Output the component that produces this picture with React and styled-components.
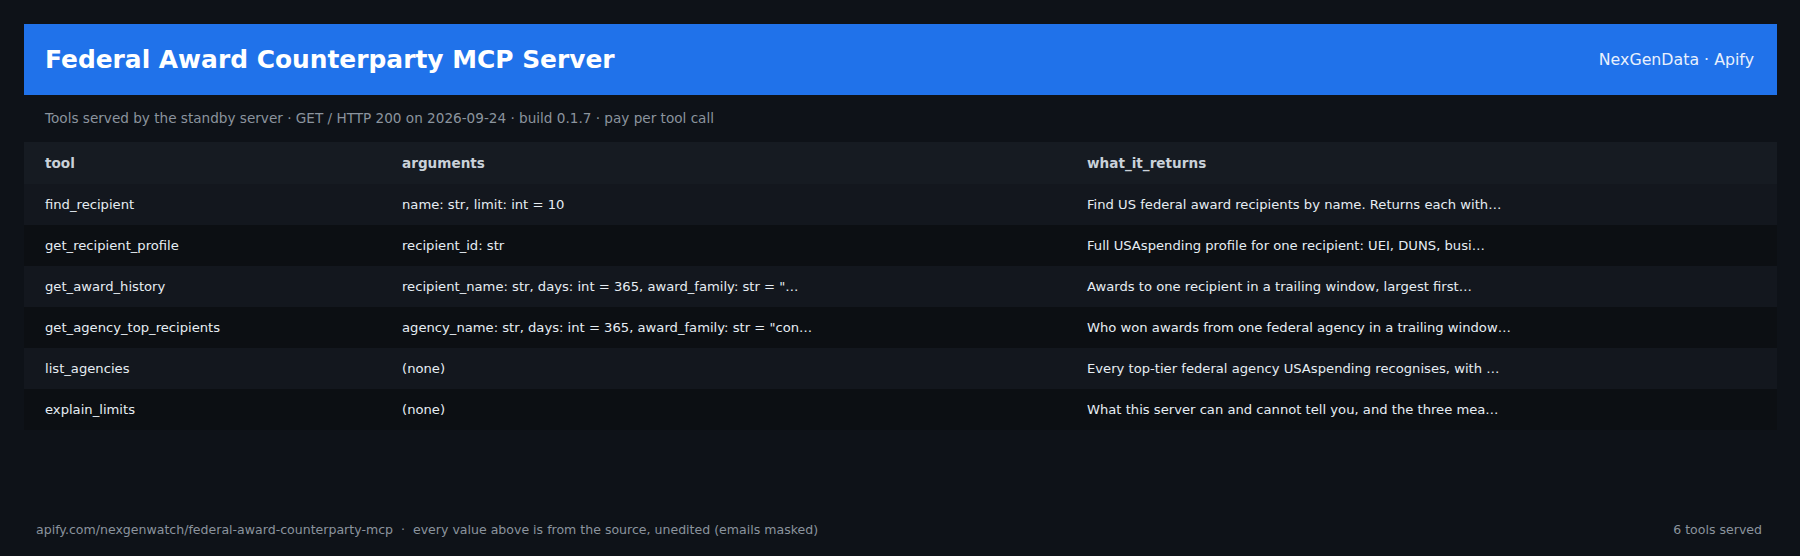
import React from 'react'
import styled, { createGlobalStyle } from 'styled-components'

const GlobalStyle = createGlobalStyle`
  html, body {
    margin: 0;
    padding: 0;
    background: #0e1218;
  }
  body {
    font-family: "DejaVu Sans", "Liberation Sans", sans-serif;
  }
`

const Page = styled.div`
  display: flex;
  flex-direction: column;
  height: 100vh;
  box-sizing: border-box;
  padding: 24px 23px 18px 24px;
`

const Banner = styled.header`
  display: flex;
  align-items: center;
  justify-content: space-between;
  height: 71px;
  padding: 0 23px 0 21px;
  background: #2072ea;
`

const Title = styled.h1`
  margin: 0;
  font-size: 24.9px;
  font-weight: bold;
  color: #ffffff;
`

const Brand = styled.span`
  font-size: 15.8px;
  color: #e8f0fd;
`

const Subtitle = styled.p`
  margin: 0;
  padding: 14px 21px;
  font-size: 13.6px;
  line-height: 19px;
  color: #8b949e;
`

const Table = styled.div`
  display: grid;
  grid-template-columns: 357px 685px 1fr;
`

const Row = styled.div`
  display: contents;
`

const Cell = styled.div`
  display: flex;
  align-items: center;
  height: ${p => (p.$head ? 42 : 41)}px;
  padding: 0 21px;
  white-space: nowrap;
  overflow: hidden;
  font-size: ${p => (p.$head ? '13.6px' : '13.15px')};
  font-weight: ${p => (p.$head ? 'bold' : 'normal')};
  color: ${p => (p.$head ? '#c9d1d9' : '#e6edf3')};
  background: ${p => (p.$head ? '#161b22' : p.$odd ? '#13171e' : '#0c0f13')};
`

const Footer = styled.footer`
  display: flex;
  justify-content: space-between;
  margin-top: auto;
  padding: 0 15px 0 12px;
  font-size: 12.55px;
  line-height: 16px;
  color: #8b949e;
`

const tools = [
  ['find_recipient', 'name: str, limit: int = 10', 'Find US federal award recipients by name. Returns each with\u2026'],
  ['get_recipient_profile', 'recipient_id: str', 'Full USAspending profile for one recipient: UEI, DUNS, busi\u2026'],
  ['get_award_history', 'recipient_name: str, days: int = 365, award_family: str = "\u2026', 'Awards to one recipient in a trailing window, largest first\u2026'],
  ['get_agency_top_recipients', 'agency_name: str, days: int = 365, award_family: str = "con\u2026', 'Who won awards from one federal agency in a trailing window\u2026'],
  ['list_agencies', '(none)', 'Every top-tier federal agency USAspending recognises, with \u2026'],
  ['explain_limits', '(none)', 'What this server can and cannot tell you, and the three mea\u2026'],
]

export default function App() {
  return (
    <>
      <GlobalStyle />
      <Page>
        <Banner>
          <Title>Federal Award Counterparty MCP Server</Title>
          <Brand>NexGenData · Apify</Brand>
        </Banner>
        <Subtitle>
          Tools served by the standby server · GET / HTTP 200 on 2026-09-24 · build 0.1.7 · pay per tool call
        </Subtitle>
        <Table>
          <Row>
            <Cell $head>tool</Cell>
            <Cell $head>arguments</Cell>
            <Cell $head>what_it_returns</Cell>
          </Row>
          {tools.map((t, i) => (
            <Row key={t[0]}>
              {t.map(v => (
                <Cell key={v} $odd={i % 2 === 0}>{v}</Cell>
              ))}
            </Row>
          ))}
        </Table>
        <Footer>
          <span>apify.com/nexgenwatch/federal-award-counterparty-mcp &nbsp;·&nbsp; every value above is from the source, unedited (emails masked)</span>
          <span>6 tools served</span>
        </Footer>
      </Page>
    </>
  )
}
